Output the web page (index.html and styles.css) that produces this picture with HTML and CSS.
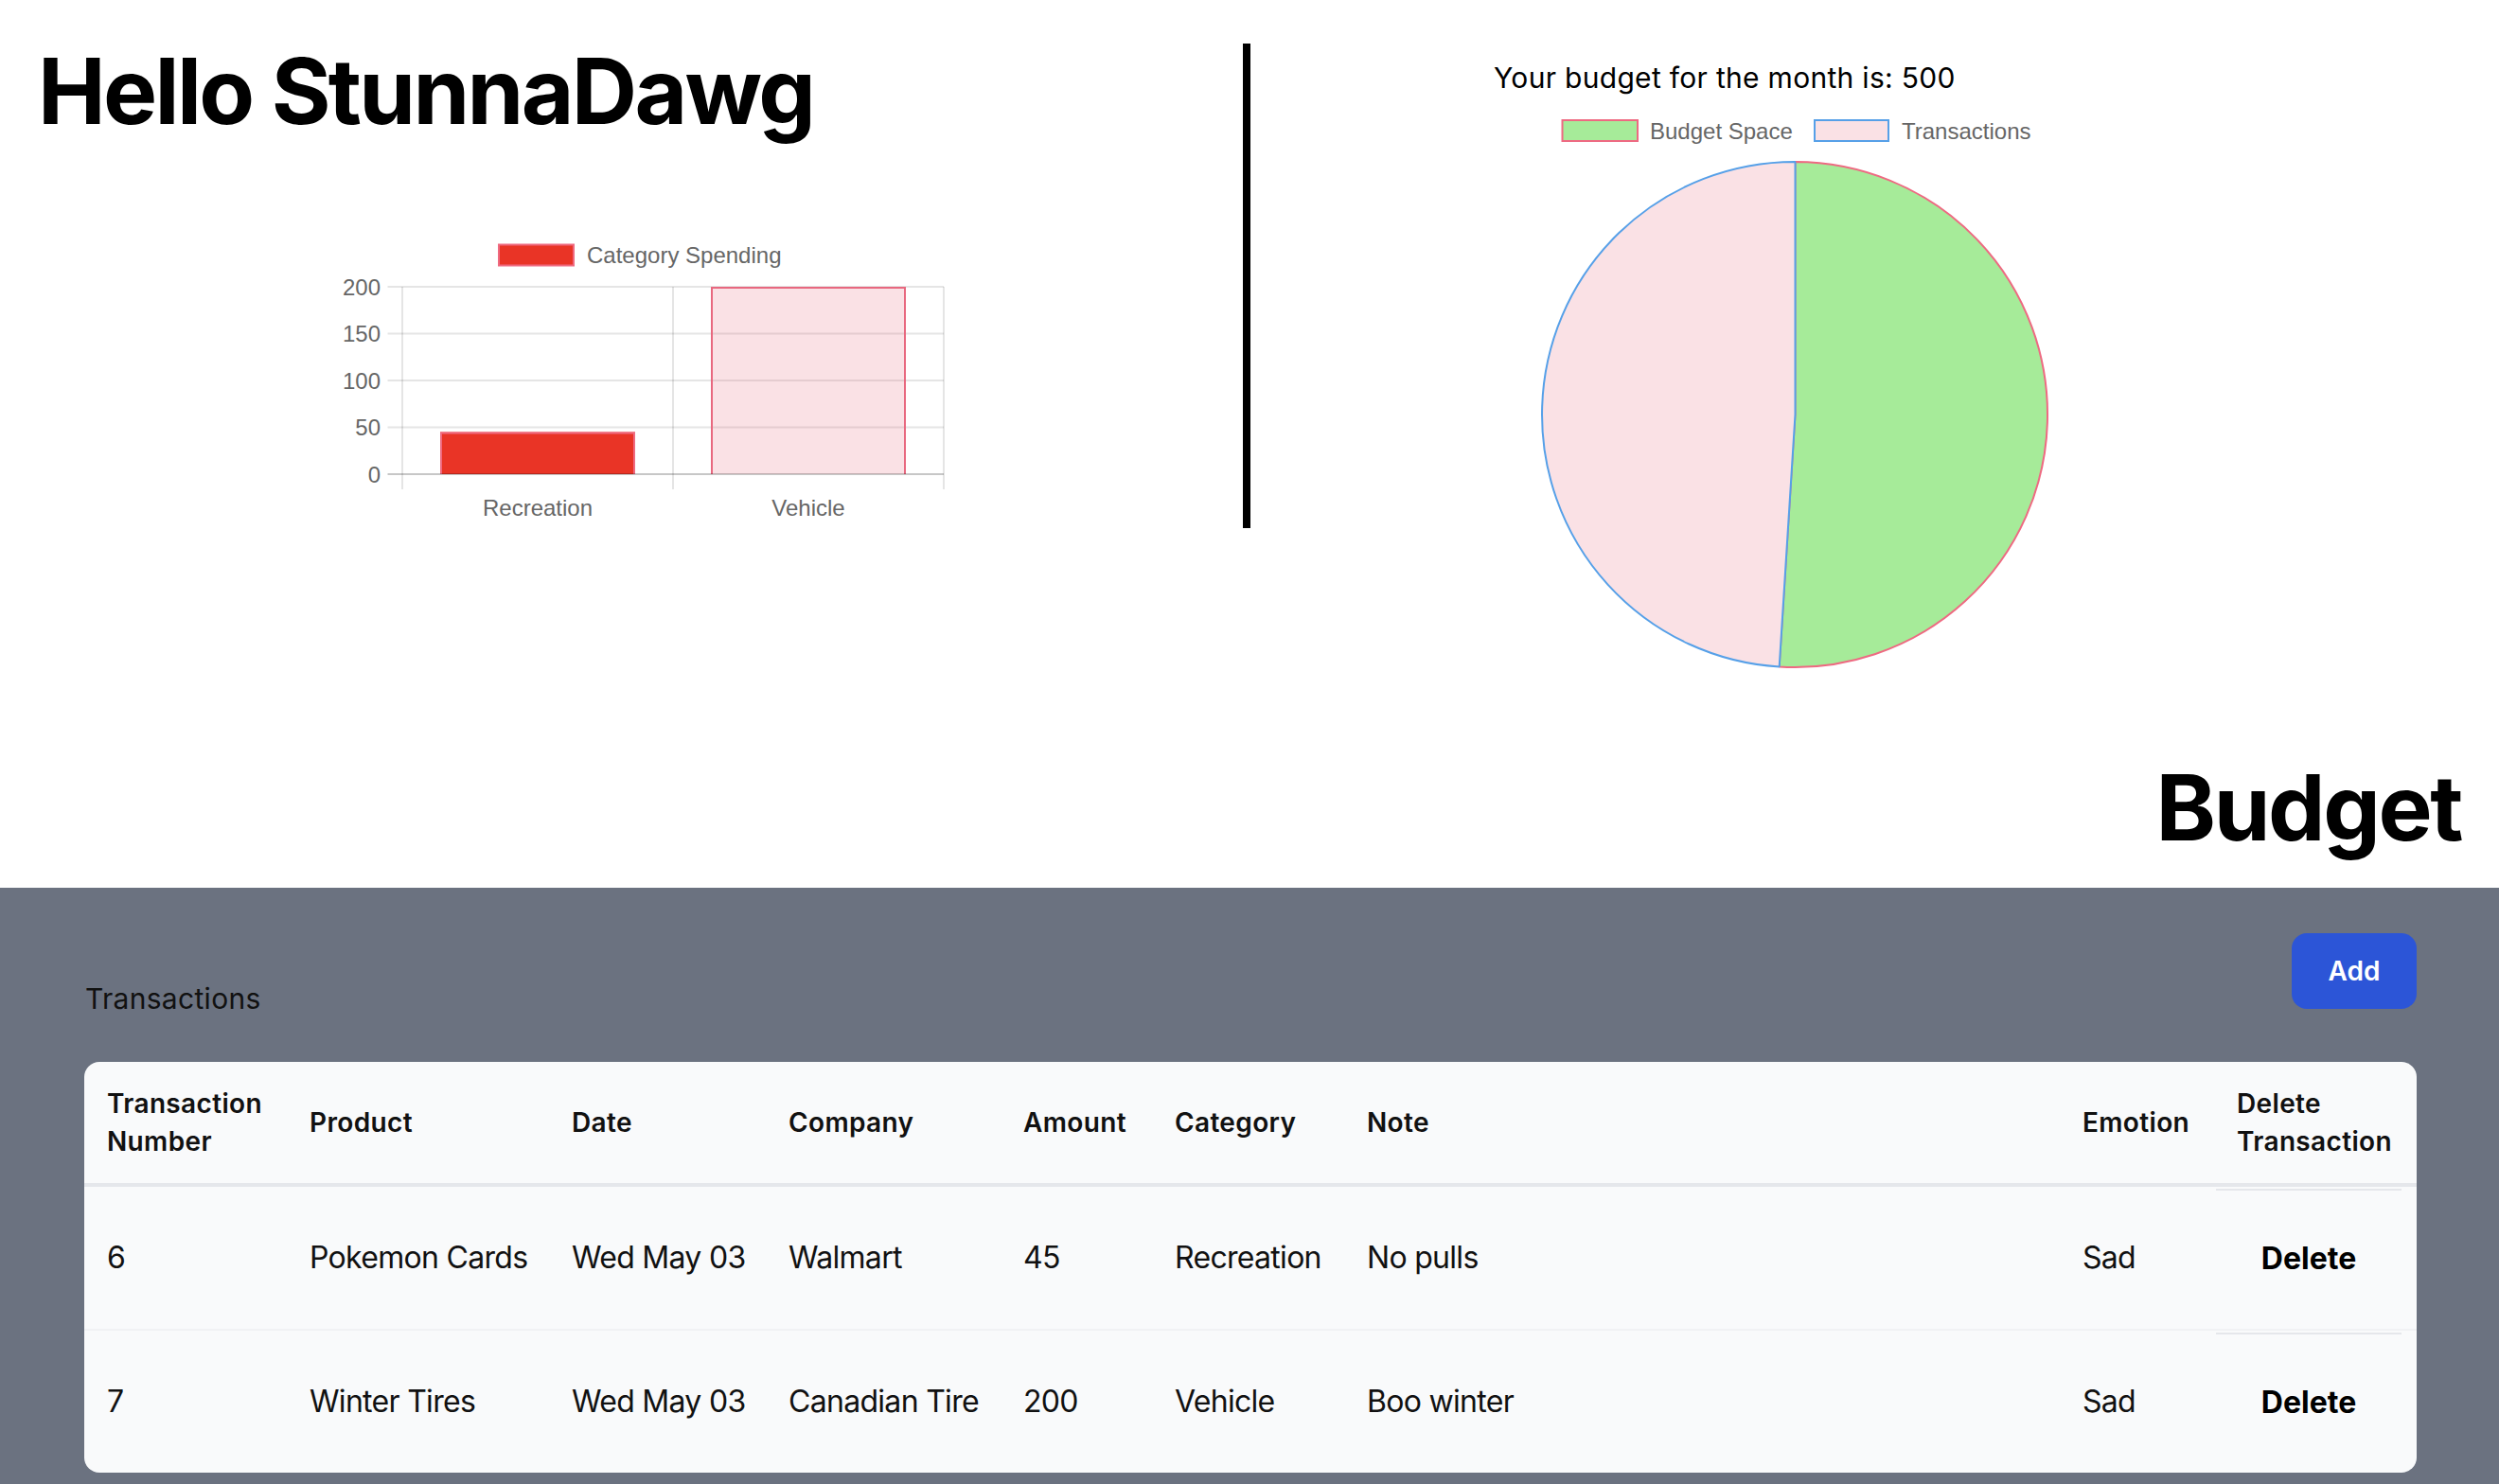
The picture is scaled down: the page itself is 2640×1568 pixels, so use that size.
FILE: index.html
```html
<!DOCTYPE html>
<html lang="en">
<head>
<meta charset="utf-8">
<title>Budget</title>
<link rel="stylesheet" href="styles.css">
</head>
<body>
<section class="top">
  <div class="cols">
    <div class="left">
      <h1 class="hello">Hello StunnaDawg</h1>
      <svg class="bar-chart" width="680" height="320" viewBox="0 0 680 320" xmlns="http://www.w3.org/2000/svg">
        <g class="grid" stroke="rgba(0,0,0,0.1)" stroke-width="2" fill="none">
          <line x1="69.5" y1="63" x2="657" y2="63"/>
          <line x1="69.5" y1="112.5" x2="657" y2="112.5"/>
          <line x1="69.5" y1="162" x2="657" y2="162"/>
          <line x1="69.5" y1="211.5" x2="657" y2="211.5"/>
          <line x1="85" y1="63" x2="85" y2="277"/>
          <line x1="371" y1="63" x2="371" y2="277"/>
          <line x1="657" y1="63" x2="657" y2="277"/>
        </g>
        <rect x="125" y="216.5" width="206" height="44.5" fill="#e93426"/>
        <polyline points="126,261 126,217.5 330,217.5 330,261" fill="none" stroke="#ef6a80" stroke-width="2"/>
        <rect x="411" y="63" width="206" height="198" fill="rgba(232,104,127,0.2)"/>
        <polyline points="412,261 412,64 616,64 616,261" fill="none" stroke="#e8687f" stroke-width="2"/>
        <line x1="69.5" y1="261" x2="657" y2="261" stroke="rgba(0,0,0,0.22)" stroke-width="2"/>
        <g class="chart-text" text-anchor="end">
          <text x="62" y="71.5">200</text>
          <text x="62" y="121">150</text>
          <text x="62" y="170.5">100</text>
          <text x="62" y="220">50</text>
          <text x="62" y="269.5">0</text>
        </g>
        <g class="chart-text" text-anchor="middle">
          <text x="228" y="305">Recreation</text>
          <text x="514" y="305">Vehicle</text>
        </g>
        <rect x="187" y="18.5" width="79" height="22" fill="#e93426" stroke="#ef6a80" stroke-width="2"/>
        <text class="chart-text" x="280" y="38">Category Spending</text>
      </svg>
    </div>
    <div class="divider"></div>
    <div class="right">
      <p class="budget-line">Your budget for the month is: 500</p>
      <svg class="pie-chart" width="600" height="600" viewBox="0 0 600 600" xmlns="http://www.w3.org/2000/svg">
        <rect x="50.5" y="12" width="79.5" height="22" fill="#a6eb99" stroke="#ee6a82" stroke-width="2"/>
        <text class="chart-text" x="143" y="31.5">Budget Space</text>
        <rect x="317" y="12" width="78" height="22" fill="#fae1e5" stroke="#56a0e8" stroke-width="2"/>
        <text class="chart-text" x="409" y="31.5">Transactions</text>
        <path d="M296.5,323 L296.5,56 A267,267 0 1 1 279.7,589.5 Z" fill="#a6eb99" stroke="#ee6a82" stroke-width="2" stroke-linejoin="bevel"/>
        <path d="M296.5,323 L279.7,589.5 A267,267 0 0 1 296.5,56 Z" fill="#fae1e5" stroke="#56a0e8" stroke-width="2" stroke-linejoin="bevel"/>
      </svg>
    </div>
  </div>
  <h2 class="budget-title">Budget</h2>
</section>

<section class="tx">
  <div class="tx-head">
    <p class="tx-label">Transactions</p>
    <button class="add-btn" type="button">Add</button>
  </div>
  <div class="card">
    <table class="tx-table">
      <thead>
        <tr>
          <th class="w-num">Transaction Number</th>
          <th class="w-product">Product</th>
          <th class="w-date">Date</th>
          <th class="w-company">Company</th>
          <th class="w-amount">Amount</th>
          <th class="w-category">Category</th>
          <th class="w-note">Note</th>
          <th class="w-emotion">Emotion</th>
          <th class="w-delete">Delete Transaction</th>
        </tr>
      </thead>
      <tbody>
        <tr class="row-first">
          <td>6</td>
          <td>Pokemon Cards</td>
          <td>Wed May 03</td>
          <td>Walmart</td>
          <td>45</td>
          <td>Recreation</td>
          <td>No pulls</td>
          <td>Sad</td>
          <td class="del"><div class="del-btn">Delete</div></td>
        </tr>
        <tr>
          <td>7</td>
          <td>Winter Tires</td>
          <td>Wed May 03</td>
          <td>Canadian Tire</td>
          <td>200</td>
          <td>Vehicle</td>
          <td>Boo winter</td>
          <td>Sad</td>
          <td class="del"><div class="del-btn">Delete</div></td>
        </tr>
      </tbody>
    </table>
  </div>
</section>
</body>
</html>
```

FILE: styles.css
```css
* { box-sizing: border-box; }

html, body {
  margin: 0;
  padding: 0;
  background: #ffffff;
  color: #000000;
  font-family: Inter, "Noto Sans", "Liberation Sans", sans-serif;
}

.top {
  padding-bottom: 37px;
}

.cols {
  display: flex;
  align-items: flex-start;
  padding-top: 46px;
}

.left {
  flex: 0 0 1313px;
}

.hello {
  margin: 2px 0 0 40px;
  font-size: 96px;
  line-height: 1;
  font-weight: 700;
  letter-spacing: -2.65px;
}

.bar-chart {
  display: block;
  margin: 96px 0 0 340px;
}

.chart-text {
  font-family: "Liberation Sans", Arial, sans-serif;
  font-size: 24px;
  fill: #666666;
}

.divider {
  flex: 0 0 8px;
  height: 512px;
  background: #000000;
}

.right {
  flex: 1;
  padding-top: 18px;
}

.budget-line {
  margin: 0 0 0 257px;
  font-size: 30px;
  line-height: 36px;
  letter-spacing: 0.3px;
}

.pie-chart {
  display: block;
  margin: 15px 0 0 279px;
}

.budget-title {
  margin: 90px 40px 0 0;
  text-align: right;
  font-size: 96px;
  line-height: 1;
  font-weight: 700;
  letter-spacing: -2.4px;
}

.tx {
  background: #6b7280;
  padding: 48px 87px 12px 89px;
}

.tx-head {
  display: flex;
  justify-content: space-between;
  align-items: flex-end;
}

.tx-label {
  margin: 0 0 -4px 1px;
  font-size: 30px;
  line-height: 30px;
  letter-spacing: 0.3px;
  color: #111111;
}

.add-btn {
  width: 132px;
  height: 80px;
  border: 0;
  border-radius: 16px;
  background: #2c55d7;
  color: #ffffff;
  font-family: Inter, "Noto Sans", sans-serif;
  font-size: 28px;
  font-weight: 600;
  padding: 0;
}

.card {
  margin-top: 56px;
  background: #f9fafb;
  border-radius: 16px;
  overflow: hidden;
}

.tx-table {
  width: 100%;
  border-collapse: separate;
  border-spacing: 0;
  table-layout: fixed;
  color: #111111;
}

.tx-table th {
  text-align: left;
  font-size: 28px;
  line-height: 40px;
  font-weight: 600;
  letter-spacing: 0.35px;
  padding: 24px;
  border-bottom: 4px solid #e5e7eb;
  vertical-align: middle;
}

.tx-table td {
  font-size: 32px;
  line-height: 48px;
  letter-spacing: -0.7px;
  padding: 51px 24px;
  white-space: nowrap;
  vertical-align: middle;
}

.tx-table .row-first td {
  border-bottom: 2px solid #f1f2f4;
}

.w-num { width: 214px; }
.w-product { width: 277px; }
.w-date { width: 229px; }
.w-company { width: 248px; }
.w-amount { width: 160px; }
.w-category { width: 203px; }
.w-note { width: 756px; }
.w-emotion { width: 163px; }
.w-delete { width: 214px; }

.tx-table td.del {
  padding: 2px 16px 0 2px;
  vertical-align: top;
}

.del-btn {
  height: 146px;
  border-top: 2px solid #e5e7eb;
  display: flex;
  align-items: center;
  justify-content: center;
  font-weight: 700;
  font-size: 32px;
  letter-spacing: 0;
  color: #000000;
}
```
